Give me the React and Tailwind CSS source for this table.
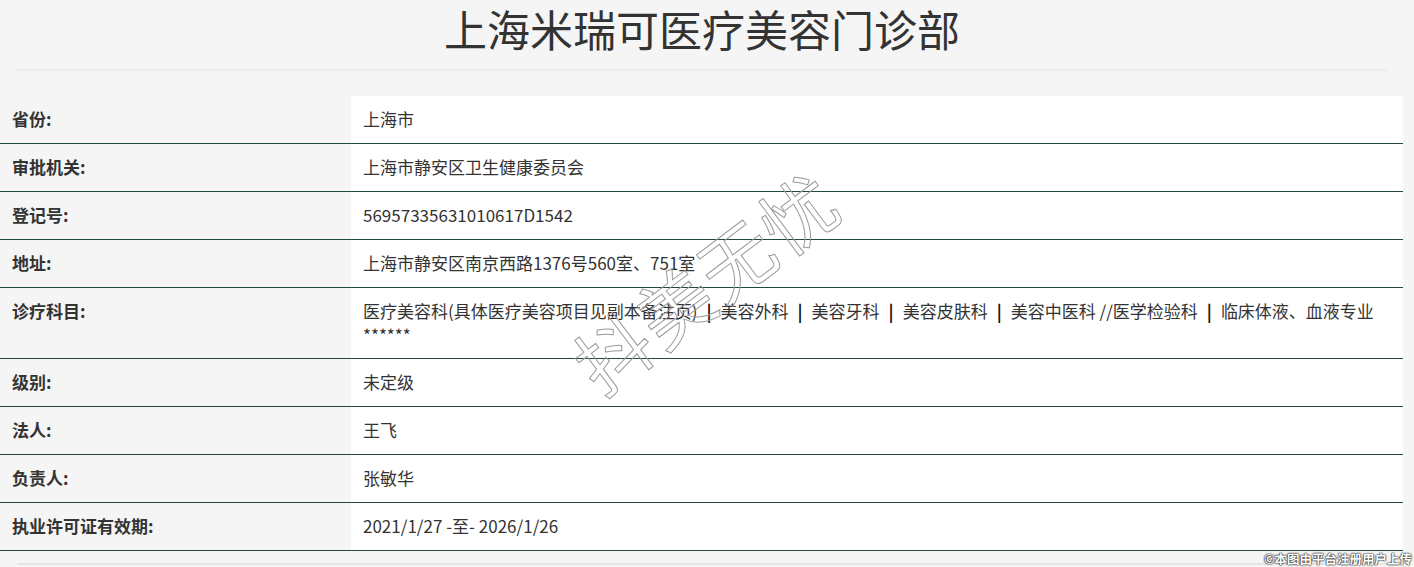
import React from 'react';

const rows = [
  { label: '省份:', value: '上海市' },
  { label: '审批机关:', value: '上海市静安区卫生健康委员会' },
  { label: '登记号:', value: '56957335631010617D1542' },
  { label: '地址:', value: '上海市静安区南京西路1376号560室、751室' },
  { label: '诊疗科目:', value: 'scope' },
  { label: '级别:', value: '未定级' },
  { label: '法人:', value: '王飞' },
  { label: '负责人:', value: '张敏华' },
  { label: '执业许可证有效期:', value: '2021/1/27 -至- 2026/1/26' },
];

const scope = ['医疗美容科(具体医疗美容项目见副本备注页)', '美容外科', '美容牙科', '美容皮肤科', '美容中医科 //医学检验科', '临床体液、血液专业'];

// separators are drawn as thick bars in the reference
const Scope = () => (
  <>
    <div className="whitespace-nowrap">
      {scope.map((s, i) => (
        <React.Fragment key={i}>
          {i > 0 && <b className="inline-block px-[9px] text-[#111]">|</b>}
          {s}
        </React.Fragment>
      ))}
    </div>
    <div>******</div>
  </>
);

const Row = ({ label, value }) => {
  const tall = value === 'scope';
  return (
    <div className={tall ? 'flex h-[71px] border-b border-[#1f4a3c]' : 'flex h-[48px] border-b border-[#1f4a3c]'}>
      <div className="w-[351px] shrink-0 pl-[12px] pt-[11px] leading-[24px] font-bold text-[#333]">
        {label}
      </div>
      <div className="flex-1 bg-white pl-[12px] pt-[11px] leading-[24px] text-[#333]">
        {tall ? <Scope /> : value}
      </div>
    </div>
  );
};

export default function App() {
  return (
    <div
      className="relative h-[567px] overflow-hidden bg-[#f5f5f5] text-[17px]"
      style={{ fontFamily: '"Noto Sans CJK SC", "Noto Sans", sans-serif' }}
    >
      <div className="w-[1404px]">
        <div className="mx-[17px] h-[71px] border-b-2 border-[#ebebeb] text-center text-[43px] leading-[56px] text-[#333]">
          上海米瑞可医疗美容门诊部
        </div>
        <div className="mt-[25px] w-[1403px]">
          {rows.map((r) => (
            <Row key={r.label} {...r} />
          ))}
        </div>
        <div className="mx-[17px] mt-[12px] border-t-2 border-[#e6e6e6]" />
      </div>

      <div
        className="pointer-events-none absolute left-[705px] top-[280px] -translate-x-1/2 -translate-y-1/2 -rotate-[37deg] whitespace-nowrap text-[74px] leading-none tracking-[3px] text-transparent"
        style={{ WebkitTextStroke: '1px #9a9a9a' }}
      >
        抖美无忧
      </div>

      <div
        className="absolute right-[2px] bottom-[1px] text-[12.5px] leading-[15px] font-bold text-white"
        style={{ textShadow: '0 0 1px #222, 0 0 1px #222, 0 0 2px #222' }}
      >
        ©本图由平台注册用户上传
      </div>
    </div>
  );
}
